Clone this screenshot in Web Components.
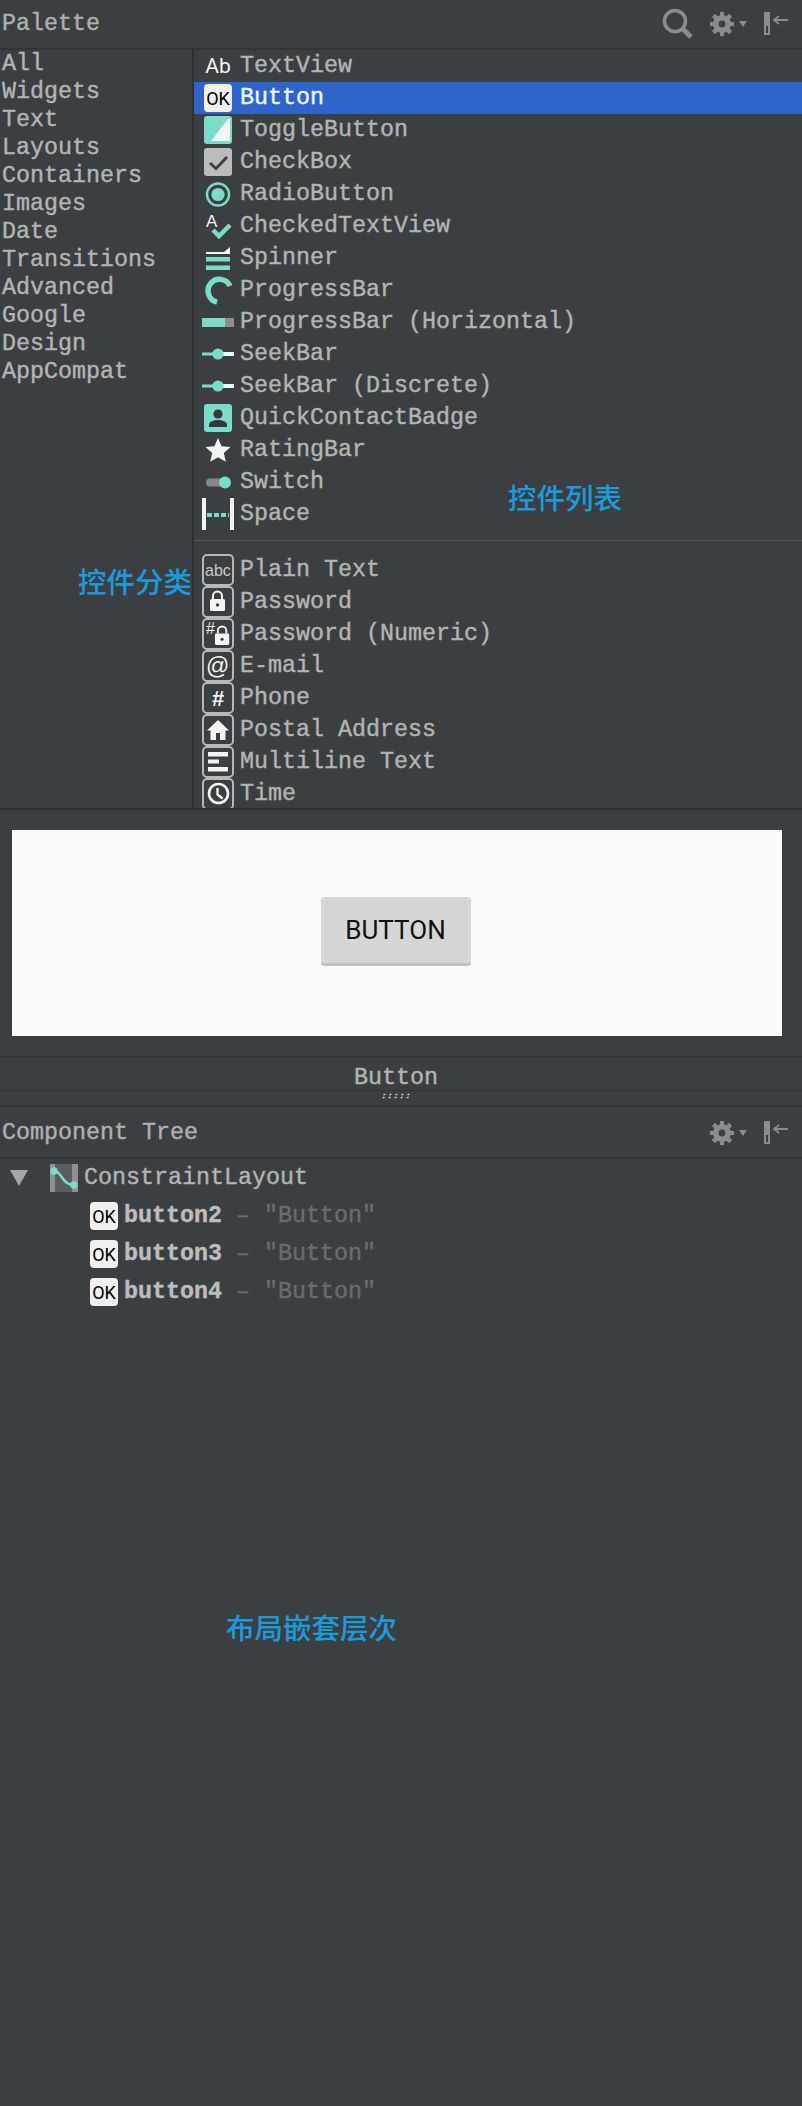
<!DOCTYPE html>
<html lang="zh">
<head>
<meta charset="utf-8">
<title>Palette</title>
<style>
    html, body {
        margin: 0;
        background: #3c3f41;
    }
    body {
        width: 802px;
        height: 2106px;
        overflow: hidden;
        position: relative;
        font-family: "Liberation Mono", monospace;
        color: #b4b4b4;
        -webkit-text-stroke: .4px currentColor;
    }
</style>
</head>
<body>
<palette-panel></palette-panel>
<preview-panel></preview-panel>
<tree-panel></tree-panel>
<note-label style="left:508px;top:478px">控件列表</note-label>
<note-label style="left:78px;top:562px">控件分类</note-label>
<note-label style="left:226px;top:1608px">布局嵌套层次</note-label>

<script>
const TEAL = '#7bdccb';
const WHITE = '#f4f4f4';
const LINE = '#b8b8b8';

const svgText = (x, y, size, fill, str, family = 'Liberation Sans', extra = '') =>
    `<text x="${x}" y="${y}" font-family="${family}, sans-serif" font-size="${size}" fill="${fill}" style="-webkit-text-stroke:0" ${extra}>${str}</text>`;

// outlined box used by the text field icons
const box = (inner) =>
    `<rect x="1" y="1" width="30" height="30" rx="4" fill="none" stroke="${LINE}" stroke-width="2"/>${inner}`;

const lock = (x, y, s) => `
    <g transform="translate(${x} ${y}) scale(${s})">
        <path d="M4 9V6a4.500 4.500 0 0 1 9 0v3" fill="none" stroke="${WHITE}" stroke-width="2"/>
        <rect x="1" y="9" width="15" height="12" rx="1.500" fill="${WHITE}"/>
        <circle cx="8.500" cy="15" r="1.700" fill="#3c3f41"/>
    </g>`;

const ICONS = {
    text: svgText(16, 23, 21, WHITE, 'Ab', 'Roboto', 'text-anchor="middle"'),
    ok: `<rect x="2" y="2" width="28" height="28" rx="4" fill="#f0f0f0"/>` + svgText(16, 22.500, 18, '#000', 'OK', 'Roboto', 'text-anchor="middle"'),
    toggle: `<rect x="2" y="2" width="28" height="28" rx="3" fill="${TEAL}"/>
        <path d="M9 27L26 5h2v22z" fill="#f2fbfa"/>`,
    check: `<rect x="2" y="2" width="28" height="28" rx="3" fill="#bcbcbc"/>
        <path d="M8 17l6 5.500L25 11" fill="none" stroke="#3f4143" stroke-width="3"/>`,
    radio: `<circle cx="16" cy="16.500" r="11" fill="none" stroke="${TEAL}" stroke-width="2.400"/>
        <circle cx="16" cy="16.500" r="6.600" fill="${TEAL}"/>`,
    checked: svgText(4, 17, 17, WHITE, 'A') + `<path d="M11 20l6 6 11-11" fill="none" stroke="${TEAL}" stroke-width="4.500"/>`,
    spinner: `<path d="M4 10h18l6-5v7H4z" fill="${WHITE}"/>
        <rect x="4" y="15" width="24" height="4.500" fill="${TEAL}"/>
        <rect x="4" y="23.500" width="24" height="4.500" fill="${TEAL}"/>`,
    progress: `<path d="M28 12A11.500 11.500 0 1 0 15 28" fill="none" stroke="${TEAL}" stroke-width="5.400"/>`,
    progressH: `<rect x="0" y="12" width="23" height="9" fill="${TEAL}"/><rect x="23" y="12" width="9" height="9" fill="#8c8f90"/>`,
    seek: `<rect x="0" y="14.500" width="16" height="3" fill="${TEAL}"/><rect x="16" y="14" width="16" height="4" fill="${WHITE}"/>
        <circle cx="16" cy="16" r="5.600" fill="${TEAL}"/>`,
    badge: `<rect x="2" y="2" width="28" height="28" rx="3" fill="${TEAL}"/>
        <circle cx="16" cy="12" r="4.600" fill="#34383a"/>
        <path d="M7 25v-2.500c0-3 5-4.500 9-4.500s9 1.500 9 4.500V25z" fill="#34383a"/>`,
    star: `<path d="M16 4l3.600 8.300 8.900.8-6.700 5.900 2 8.800L16 23.200 8.200 27.800l2-8.800-6.700-5.900 8.900-.8z" fill="${WHITE}"/>`,
    toggleSwitch: `<rect x="4" y="12.500" width="20" height="8" rx="4" fill="#85888a"/><circle cx="23" cy="16.500" r="6" fill="${TEAL}"/>`,
    space: `<rect x="0" y="0" width="4" height="32" fill="${WHITE}"/><rect x="28" y="0" width="4" height="32" fill="${WHITE}"/>
        <path d="M5 17h22" stroke="${TEAL}" stroke-width="4" stroke-dasharray="5 2"/>`,
    abc: box(svgText(3, 22, 16, '#c8c8c8', 'abc')),
    password: box(lock(7, 4, 1)),
    passwordNum: box(svgText(4, 16, 16, WHITE, '#') + lock(12, 7, .95)),
    email: box(svgText(4, 24, 23, WHITE, '@')),
    phone: box(svgText(10, 24, 22, WHITE, '#', 'Liberation Sans', 'font-weight="bold"')),
    postal: box(`<path d="M16 6L5 16.500h3.500V26h5.500v-7h4v7h5.500v-9.500H27z" fill="${WHITE}"/>`),
    multiline: box(`<rect x="6" y="6" width="20" height="4.500" fill="${WHITE}"/><rect x="6" y="13.500" width="11" height="4" fill="${WHITE}"/><rect x="6" y="21" width="20" height="4.500" fill="${WHITE}"/>`),
    time: box(`<circle cx="16.500" cy="15.500" r="9.500" fill="none" stroke="${WHITE}" stroke-width="2.600"/><path d="M15.500 10v6.500l5 4" fill="none" stroke="${WHITE}" stroke-width="2.400"/>`),
    constraint: `<rect x="0" y="0" width="28" height="28" fill="#8f9293"/><rect x="5" y="0" width="17" height="28" fill="#5a5d5e"/>
        <path d="M4 7c8 0 8 14 20 14" fill="none" stroke="${TEAL}" stroke-width="2.600"/>
        <circle cx="4" cy="7" r="3.800" fill="${TEAL}"/><circle cx="24" cy="21" r="3.800" fill="${TEAL}"/>`
};

class IdeToolbar extends HTMLElement {
    connectedCallback() {
        const teeth = [0, 45, 90, 135, 180, 225, 270, 315]
            .map(a => `<rect x="10" y="0" width="4" height="24" transform="rotate(${a} 12 12)" fill="#8a8c8d"/>`).join('');
        const search = this.hasAttribute('search') ? `
            <svg class="search" width="32" height="32" viewBox="0 0 32 32">
                <circle cx="13" cy="13" r="10.500" fill="none" stroke="#8a8c8d" stroke-width="3.600"/>
                <path d="M20.500 20.500L29 29" stroke="#8a8c8d" stroke-width="5"/>
            </svg>` : '';
        this.attachShadow({ mode: 'open' }).innerHTML = `
            <style>
                :host {
                    display: flex;
                    align-items: center;
                    gap: 16px;
                    padding-right: 13px;
                }
                svg { display: block; }
                .gear { display: flex; align-items: center; gap: 5px; }
            </style>
            ${search}
            <div class="gear">
                <svg width="24" height="24" viewBox="0 0 24 24">
                    ${teeth}
                    <circle cx="12" cy="12" r="9" fill="#8a8c8d"/>
                    <circle cx="12" cy="12" r="3.400" fill="#3c3f41"/>
                </svg>
                <svg width="8" height="6" viewBox="0 0 8 6"><path d="M0 0h8L4 6z" fill="#8a8c8d"/></svg>
            </div>
            <svg width="26" height="26" viewBox="0 0 26 26">
                <rect x="1" y="1" width="6" height="23" fill="#8a8c8d"/>
                <rect x="3" y="15" width="2" height="7" fill="#3c3f41"/>
                <path d="M25 9H12M16 5l-5 4 5 4" fill="none" stroke="#8a8c8d" stroke-width="1.800"/>
            </svg>`;
    }
}
customElements.define('ide-toolbar', IdeToolbar);

class PaletteItem extends HTMLElement {
    connectedCallback() {
        this.attachShadow({ mode: 'open' }).innerHTML = `
            <style>
                :host {
                    display: flex;
                    align-items: center;
                    height: 32px;
                    padding-left: 8px;
                    font-size: 23.330px;
                    color: #b4b4b4;
                    white-space: pre;
                    flex: none;
                }
                :host([selected]) {
                    background: #2f65ca;
                    color: #f2f6fd;
                }
                svg { display: block; flex: none; margin-right: 6px; }
            </style>
            <svg width="32" height="32" viewBox="0 0 32 32">${ICONS[this.getAttribute('icon')] || ''}</svg>
            <slot></slot>`;
    }
}
customElements.define('palette-item', PaletteItem);

class PalettePanel extends HTMLElement {
    connectedCallback() {
        const groups = ['All', 'Widgets', 'Text', 'Layouts', 'Containers', 'Images', 'Date', 'Transitions', 'Advanced', 'Google', 'Design', 'AppCompat'];
        const widgets = [['text', 'TextView'], ['ok', 'Button'], ['toggle', 'ToggleButton'], ['check', 'CheckBox'], ['radio', 'RadioButton'],
            ['checked', 'CheckedTextView'], ['spinner', 'Spinner'], ['progress', 'ProgressBar'], ['progressH', 'ProgressBar (Horizontal)'],
            ['seek', 'SeekBar'], ['seek', 'SeekBar (Discrete)'], ['badge', 'QuickContactBadge'], ['star', 'RatingBar'], ['toggleSwitch', 'Switch'], ['space', 'Space']];
        const fields = [['abc', 'Plain Text'], ['password', 'Password'], ['passwordNum', 'Password (Numeric)'], ['email', 'E-mail'],
            ['phone', 'Phone'], ['postal', 'Postal Address'], ['multiline', 'Multiline Text'], ['time', 'Time']];
        const row = ([icon, name]) => `<palette-item icon="${icon}" ${name === 'Button' ? 'selected' : ''}>${name}</palette-item>`;
        this.attachShadow({ mode: 'open' }).innerHTML = `
            <style>
                :host {
                    display: flex;
                    flex-direction: column;
                    height: 810px;
                    box-sizing: border-box;
                    border-bottom: 2px solid #2e3032;
                    font-size: 23.330px;
                }
                .head {
                    display: flex;
                    align-items: center;
                    justify-content: space-between;
                    height: 50px;
                    flex: none;
                    box-sizing: border-box;
                    border-bottom: 2px solid #323436;
                    padding-left: 2px;
                    color: #b0b0b0;
                }
                .body { display: flex; flex: 1; min-height: 0; }
                .groups {
                    width: 192px;
                    flex: none;
                    border-right: 2px solid #2e3032;
                }
                .groups div { height: 28px; line-height: 28px; padding-left: 2px; }
                .widgets { flex: 1; display: flex; flex-direction: column; overflow: hidden; }
                hr { border: 0; height: 1px; background: #55585a; margin: 10px 0 13px; flex: none; }
            </style>
            <div class="head"><span>Palette</span><ide-toolbar search></ide-toolbar></div>
            <div class="body">
                <div class="groups">${groups.map(g => `<div>${g}</div>`).join('')}</div>
                <div class="widgets">
                    ${widgets.map(row).join('')}
                    <hr>
                    ${fields.map(row).join('')}
                </div>
            </div>`;
    }
}
customElements.define('palette-panel', PalettePanel);

class PreviewPanel extends HTMLElement {
    connectedCallback() {
        this.attachShadow({ mode: 'open' }).innerHTML = `
            <style>
                :host { display: block; }
                .stage { height: 246px; box-sizing: border-box; padding: 20px 20px 20px 12px; }
                .screen {
                    height: 100%;
                    background: #fbfbfb;
                    display: flex;
                    align-items: center;
                    justify-content: center;
                }
                .btn {
                    width: 150px;
                    height: 69px;
                    box-sizing: border-box;
                    background: #d6d6d6;
                    border-radius: 3px;
                    border-bottom: 3px solid #c2c2c2;
                    display: flex;
                    align-items: center;
                    justify-content: center;
                    font: 26px Roboto, sans-serif;
                    -webkit-text-stroke: 0;
                    color: #111;
                    margin-right: 3px;
                    margin-top: -3px;
                }
                .title {
                    height: 35px;
                    box-sizing: border-box;
                    border-top: 1px solid #323436;
                    border-bottom: 1px solid #323436;
                    display: flex;
                    align-items: center;
                    justify-content: center;
                    font-size: 23.330px;
                    padding-top: 8px;
                    padding-right: 10px;
                }
                .split {
                    height: 16px;
                    box-sizing: border-box;
                    border-bottom: 2px solid #323436;
                    display: flex;
                    justify-content: center;
                    padding-right: 10px;
                }
                .dots {
                    width: 30px;
                    height: 6px;
                    margin-top: 2px;
                    background: radial-gradient(circle, #d8d8d8 .8px, transparent 1.100px) 0 0 / 6px 3px;
                    transform: skewX(-15deg);
                }
            </style>
            <div class="stage"><div class="screen"><div class="btn">BUTTON</div></div></div>
            <div class="title">Button</div>
            <div class="split"><div class="dots"></div></div>`;
    }
}
customElements.define('preview-panel', PreviewPanel);

class TreeRow extends HTMLElement {
    connectedCallback() {
        this.attachShadow({ mode: 'open' }).innerHTML = `
            <style>
                :host {
                    display: flex;
                    align-items: center;
                    height: 38px;
                    padding-left: 90px;
                    font-size: 23.330px;
                    white-space: pre;
                }
                svg { display: block; margin-right: 6px; flex: none; }
                b { color: #bdbdbd; }
                span { color: #6a6c6e; }
            </style>
            <svg width="28" height="32" viewBox="2 0 28 32">${ICONS.ok}</svg>
            <b>${this.getAttribute('name')}</b><span> – "Button"</span>`;
    }
}
customElements.define('tree-row', TreeRow);

class TreePanel extends HTMLElement {
    connectedCallback() {
        this.attachShadow({ mode: 'open' }).innerHTML = `
            <style>
                :host { display: block; font-size: 23.330px; }
                .head {
                    display: flex;
                    align-items: center;
                    justify-content: space-between;
                    height: 52px;
                    box-sizing: border-box;
                    border-bottom: 2px solid #323436;
                    padding-left: 2px;
                    padding-top: 2px;
                    color: #b0b0b0;
                }
                .root {
                    display: flex;
                    align-items: center;
                    height: 28px;
                    margin-top: 5px;
                    padding-left: 10px;
                    margin-bottom: 5px;
                    color: #b4b4b4;
                }
                .root svg { display: block; flex: none; }
                .arrow { margin-right: 22px; }
                .type { margin-right: 6px; }
            </style>
            <div class="head"><span>Component Tree</span><ide-toolbar></ide-toolbar></div>
            <div class="root">
                <svg class="arrow" width="18" height="16" viewBox="0 0 18 16"><path d="M0 0h18L9 16z" fill="#a6a6a6"/></svg>
                <svg class="type" width="28" height="28" viewBox="0 0 28 28">${ICONS.constraint}</svg>
                <span>ConstraintLayout</span>
            </div>
            <tree-row name="button2"></tree-row>
            <tree-row name="button3"></tree-row>
            <tree-row name="button4"></tree-row>`;
    }
}
customElements.define('tree-panel', TreePanel);

// blue annotations laid over the screenshot
class NoteLabel extends HTMLElement {
    connectedCallback() {
        this.attachShadow({ mode: 'open' }).innerHTML = `
            <style>
                :host {
                    display: block;
                    position: absolute;
                    font: 500 28.500px/38px "Noto Sans CJK SC", sans-serif;
                    -webkit-text-stroke: 0;
                    color: #1a9bdc;
                    white-space: nowrap;
                }
            </style>
            <slot></slot>`;
    }
}
customElements.define('note-label', NoteLabel);
</script>
</body>
</html>
